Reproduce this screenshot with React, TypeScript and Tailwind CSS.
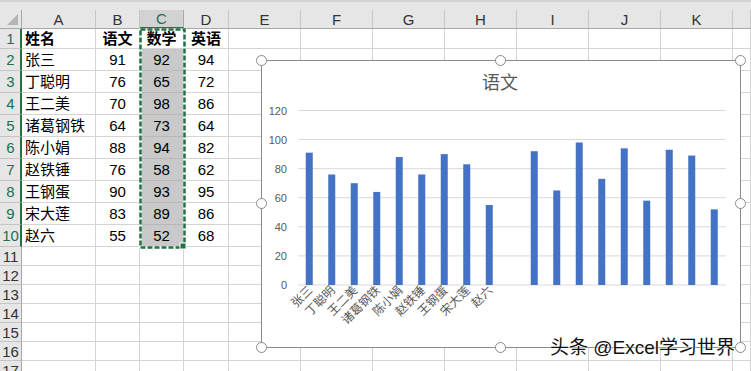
const FONT = "font-['Liberation_Sans','Noto_Sans_CJK_SC',sans-serif]"

const COLS = [
  { key: "A", w: "w-[74px]" },
  { key: "B", w: "w-[44px]" },
  { key: "C", w: "w-[44px]" },
  { key: "D", w: "w-[45px]" },
  { key: "E", w: "w-[72px]" },
  { key: "F", w: "w-[72px]" },
  { key: "G", w: "w-[72px]" },
  { key: "H", w: "w-[72px]" },
  { key: "I", w: "w-[72px]" },
  { key: "J", w: "w-[72px]" },
  { key: "K", w: "w-[72px]" },
  { key: "L", w: "w-[18px]" },
]

const DATA: string[][] = [
  ["姓名", "语文", "数学", "英语"],
  ["张三", "91", "92", "94"],
  ["丁聪明", "76", "65", "72"],
  ["王二美", "70", "98", "86"],
  ["诸葛钢铁", "64", "73", "64"],
  ["陈小娟", "88", "94", "82"],
  ["赵铁锤", "76", "58", "62"],
  ["王钢蛋", "90", "93", "95"],
  ["宋大莲", "83", "89", "86"],
  ["赵六", "55", "52", "68"],
]

// chart series: 语文 then a blank slot then 数学
const YUWEN = DATA.slice(1).map(r => Number(r[1]))
const SHUXUE = DATA.slice(1).map(r => Number(r[2]))
const NAMES = DATA.slice(1).map(r => r[0])
const SERIES: (number | null)[] = [...YUWEN, null, ...SHUXUE]

function Row({ n, h }: { n: number; h: string }) {
  const sel = n >= 1 && n <= 10
  const cells = DATA[n - 1]
  return (
    <div className={`flex ${h}`}>
      <div
        className={`w-[22px] shrink-0 flex items-center justify-center bg-[#e6e6e6] border-b border-[#c4c4c4] text-[15px] leading-none ${sel ? "border-r-2 border-r-[#217346] text-[#22704a] pl-[1px]" : "border-r border-r-[#a8a8a8] text-[#333]"}`}
      >
        {n}
      </div>
      {COLS.map((c, i) => {
        const val = cells ? cells[i] : undefined
        const grey = c.key === "C" && n >= 2 && n <= 10
        return (
          <div
            key={c.key}
            className={`${c.w} shrink-0 flex items-center border-r border-b ${grey ? "bg-[#c9c9c9] border-[#b8b8b8]" : "bg-white border-[#d4d4d4]"} text-[15px] text-black leading-none ${i === 0 ? "justify-start pl-[3px]" : "justify-center"} ${n === 1 ? "font-bold" : ""}`}
          >
            {val}
          </div>
        )
      })}
    </div>
  )
}

function Chart() {
  const ox = 262
  const oy = 61
  const y0 = 285 - oy
  const step = 174.5 / 6
  const scale = 174.5 / 120
  const cx = (i: number) => 298 - ox + 22.5 * (i + 0.5)
  return (
    <div className="absolute left-[261px] top-[60px] w-[480px] h-[288px] border border-[#8a8a8a] bg-white">
      <svg width="478" height="286" className="block">
        <text x={238} y={28} textAnchor="middle" fontSize="18" fill="#595959" fontFamily="'Noto Sans CJK SC', sans-serif">
          语文
        </text>
        {[0, 1, 2, 3, 4, 5, 6].map(k => (
          <g key={k}>
            <line x1={36} x2={464} y1={y0 - k * step} y2={y0 - k * step} stroke="#d9d9d9" strokeWidth="1" />
            <text x={25} y={y0 - k * step + 4} textAnchor="end" fontSize="11" fill="#595959" fontFamily="'Liberation Sans', sans-serif">
              {k * 20}
            </text>
          </g>
        ))}
        {SERIES.map((v, i) =>
          v === null ? null : (
            <rect key={i} x={cx(i) - 3.5} y={y0 - v * scale} width={7} height={v * scale} fill="#4472c4" />
          )
        )}
        {NAMES.map((nm, i) => (
          <text
            key={nm}
            x={cx(i) + 4}
            y={y0 + 6}
            textAnchor="end"
            fontSize="12"
            fill="#595959"
            fontFamily="'Noto Sans CJK SC', sans-serif"
            transform={`rotate(-45 ${cx(i) + 4} ${y0 + 6})`}
          >
            {nm}
          </text>
        ))}
      </svg>
    </div>
  )
}

const HANDLES = [
  "left-[256px] top-[55px]",
  "left-[495px] top-[55px]",
  "left-[735px] top-[55px]",
  "left-[256px] top-[198px]",
  "left-[735px] top-[198px]",
  "left-[256px] top-[342px]",
  "left-[495px] top-[342px]",
  "left-[735px] top-[342px]",
]

export default function App() {
  const rowHeights = [
    "h-[20px]", "h-[22px]", "h-[22px]", "h-[22px]", "h-[22px]", "h-[22px]", "h-[22px]", "h-[22px]", "h-[22px]", "h-[22px]",
    "h-[19px]", "h-[19px]", "h-[19px]", "h-[19px]", "h-[19px]", "h-[19px]", "h-[19px]",
  ]

  return (
    <div className={`relative w-[751px] h-[371px] overflow-hidden bg-white ${FONT}`}>
      {/* formula bar edge */}
      <div className="h-[10px] bg-[#e6e6e6] border-t-2 border-[#d2d2d2]" />

      {/* column headers */}
      <div className="flex h-[19px] bg-[#e6e6e6]">
        <div className="w-[22px] shrink-0 relative border-r border-b border-[#a8a8a8]">
          <svg className="absolute left-[7px] top-[4px]" width="11" height="11">
            <polygon points="11,0 11,11 0,11" fill="#b4b4b4" />
          </svg>
        </div>
        {COLS.map(c => (
          <div
            key={c.key}
            className={`${c.w} shrink-0 flex items-center justify-center text-[15px] leading-none border-r ${c.key === "C" ? "bg-[#d2d2d2] border-b-2 border-b-[#217346] border-r-[#a8a8a8] text-[#22704a]" : "border-b border-[#a8a8a8] border-r-[#c6c6c6] text-[#333]"}`}
          >
            {c.key === "L" ? "" : c.key}
          </div>
        ))}
      </div>

      {rowHeights.map((h, i) => (
        <Row key={i} n={i + 1} h={h} />
      ))}

      {/* copy marquee around C1:C10 */}
      <svg className="absolute left-[139px] top-[28px]" width="47" height="222">
        <rect x="1.5" y="1.5" width="44" height="218" fill="none" stroke="#ffffff" strokeWidth="2.5" />
        <rect x="1.5" y="1.5" width="44" height="218" fill="none" stroke="#217346" strokeWidth="2.5" strokeDasharray="5 2" />
        <rect x="41" y="215" width="6" height="6" fill="#217346" stroke="#ffffff" strokeWidth="1" />
      </svg>

      <Chart />

      {HANDLES.map(p => (
        <div key={p} className={`absolute ${p} w-[11px] h-[11px] rounded-full border-[1.5px] border-[#8a8a8a] bg-white`} />
      ))}

      <div className="absolute left-[550px] top-[337px] text-[19px] leading-[22px] text-[#111] whitespace-nowrap [text-shadow:0_0_2px_#fff,0_0_2px_#fff]">
        头条 @Excel学习世界
      </div>
    </div>
  )
}
